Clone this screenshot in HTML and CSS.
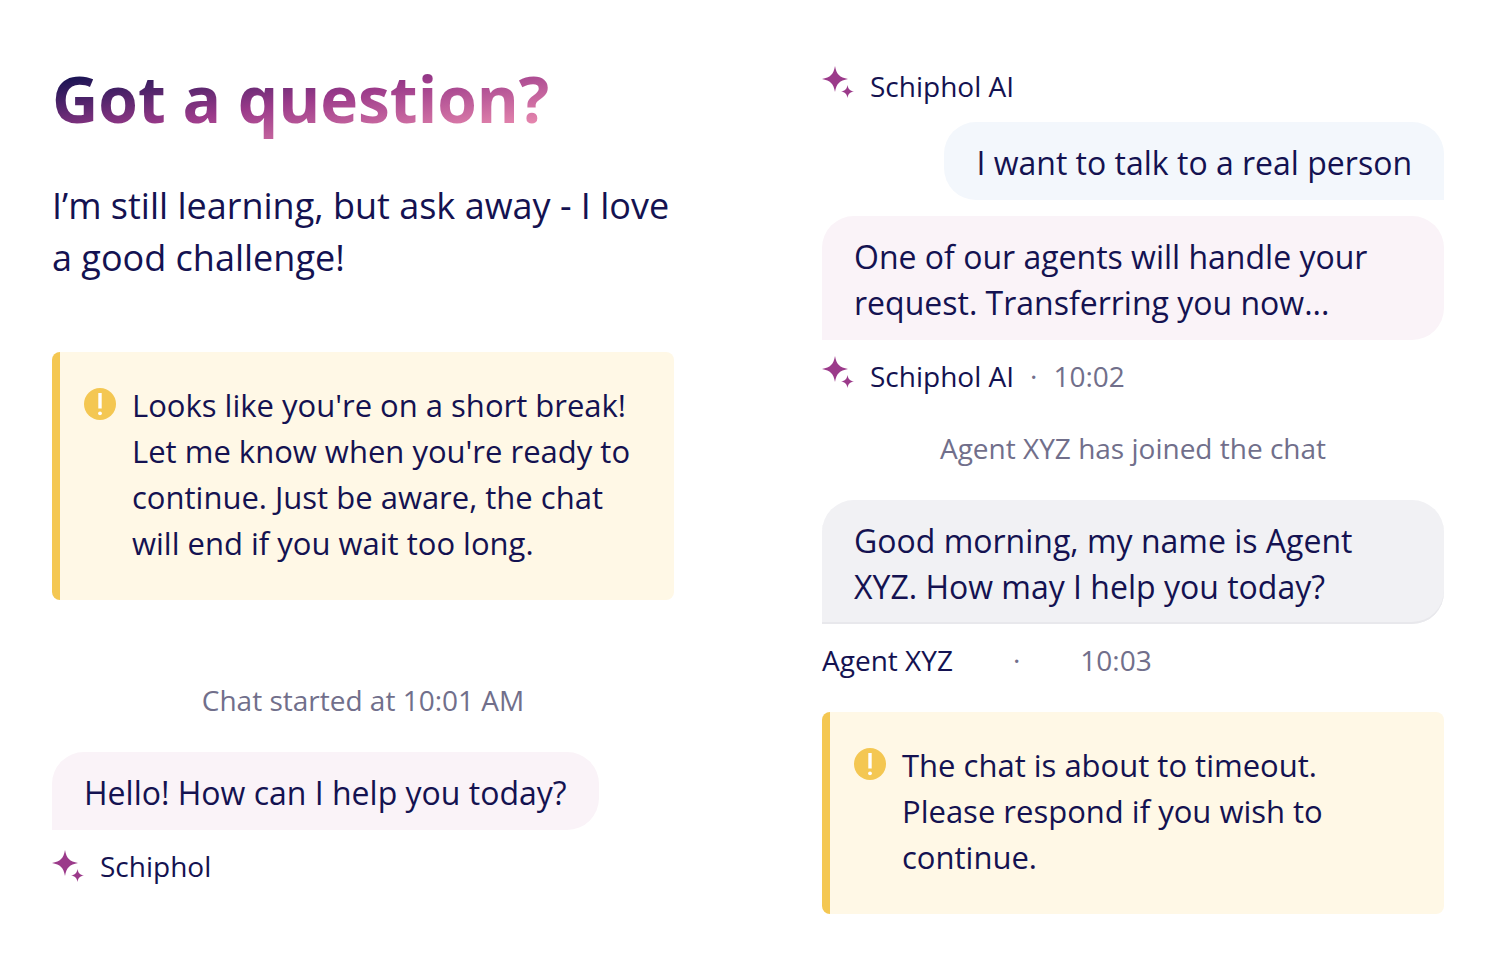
FILE: index.html
```html
<!DOCTYPE html>
<html lang="en">
<head>
<meta charset="utf-8">
<title>Got a question?</title>
<link rel="stylesheet" href="styles.css">
</head>
<body>
<svg class="defs" aria-hidden="true">
  <defs>
    <symbol id="sparkles" viewBox="0 0 32 32">
      <path d="M13 0C14.6 8.500 17.500 11.400 26 13C17.500 14.600 14.600 17.500 13 26C11.400 17.500 8.500 14.600 0 13C8.500 11.400 11.400 8.500 13 0Z"/>
      <path d="M25.500 19C26.300 23.200 27.800 24.700 32 25.500C27.800 26.300 26.300 27.800 25.500 32C24.700 27.800 23.200 26.300 19 25.500C23.200 24.700 24.700 23.200 25.500 19Z"/>
    </symbol>
    <symbol id="alert" viewBox="0 0 32 32">
      <circle cx="16" cy="16" r="16" fill="#f4c752"/>
      <path d="M14.300 5h3.400v15.500h-3.400z" fill="#fff"/><circle cx="16" cy="25.300" r="1.900" fill="#fff"/>
    </symbol>
  </defs>
</svg>
<main class="page">
  <section class="column">
    <h1 class="title">Got a question?</h1>
    <p class="intro">I’m still learning, but ask away - I love a good challenge!</p>
    <div class="notice notice-break" role="status">
      <svg class="icon"><use href="#alert"/></svg>
      <p class="notice-text">Looks like you're on a short break! Let me know when you're ready to continue. Just be aware, the chat will end if you wait too long.</p>
    </div>
    <p class="event">Chat started at 10:01 AM</p>
    <p class="bubble bubble-ai bubble-hello">Hello! How can I help you today?</p>
    <div class="sender sender-centered"><svg class="icon spark"><use href="#sparkles"/></svg><span>Schiphol</span></div>
  </section>
  <section class="column column-chat">
    <div class="sender sender-first"><svg class="icon spark"><use href="#sparkles"/></svg><span>Schiphol AI</span></div>
    <p class="bubble bubble-user">I want to talk to a real person</p>
    <p class="bubble bubble-ai">One of our agents will handle your request. Transferring you now...</p>
    <div class="sender"><svg class="icon spark"><use href="#sparkles"/></svg><span>Schiphol AI</span><span class="dot">·</span><time class="time">10:02</time></div>
    <p class="event event-joined">Agent XYZ has joined the chat</p>
    <p class="bubble bubble-agent">Good morning, my name is Agent XYZ. How may I help you today?</p>
    <div class="sender sender-agent"><span>Agent XYZ</span><span class="dot">·</span><time class="time">10:03</time></div>
    <div class="notice" role="status">
      <svg class="icon"><use href="#alert"/></svg>
      <p class="notice-text">The chat is about to timeout. Please respond if you wish to continue.</p>
    </div>
  </section>
</main>
</body>
</html>
```
FILE: styles.css
```css
* { box-sizing: border-box; }
body { margin: 0; background: #fff; color: #141251; font-family: "Open Sans", "Noto Sans", sans-serif; }
h1, p { margin: 0; }
.defs { position: absolute; width: 0; height: 0; }
.page { display: grid; grid-template-columns: 1fr 1fr; column-gap: 148px; padding: 64px 42px 64px 52px; }
.column { display: flex; flex-direction: column; align-items: flex-start; }
.title { font-size: 64px; line-height: 70px; padding-bottom: 14px; color: transparent; background: linear-gradient(to bottom right, #141251 8%, #9b3a8a 47%, #ea8bb0 86%); background-clip: text; -webkit-background-clip: text; }
.intro { margin-top: 32px; font-size: 36px; line-height: 52px; }
.notice { display: flex; gap: 16px; width: 100%; padding: 30px 32px 34px 24px; border-left: 8px solid #f4c752; border-radius: 8px; background: #fff8e6; font-size: 31px; line-height: 46px; }
.notice-break { margin-top: 68px; }
.icon { flex: none; width: 32px; height: 32px; }
.notice .icon { margin-top: 6px; }
.spark { fill: #9b3a8a; }
.event { align-self: center; margin-top: 80px; font-size: 28px; line-height: 40px; color: #716f8b; }
.event-joined { margin-top: 32px; margin-bottom: 32px; }
.bubble { padding: 18px 32px 14px; font-size: 32px; line-height: 46px; border-radius: 32px; }
.bubble-ai { background: #faf3f8; border-bottom-left-radius: 0; }
.bubble-hello { margin-top: 32px; }
.bubble-user { align-self: flex-end; margin: 16px 0; background: #f3f7fc; border-bottom-right-radius: 0; }
.bubble-agent { background: #f1f1f4; border-bottom-left-radius: 0; box-shadow: inset 0 -2px #e8e8ec; }
.sender { display: flex; gap: 16px; margin-top: 16px; font-size: 28px; line-height: 40px; }
.sender-centered { align-items: center; }
.sender-first { margin-top: 2px; }
.dot, .time { color: #716f8b; }
.sender-agent { gap: 60px; margin-bottom: 32px; }
```
